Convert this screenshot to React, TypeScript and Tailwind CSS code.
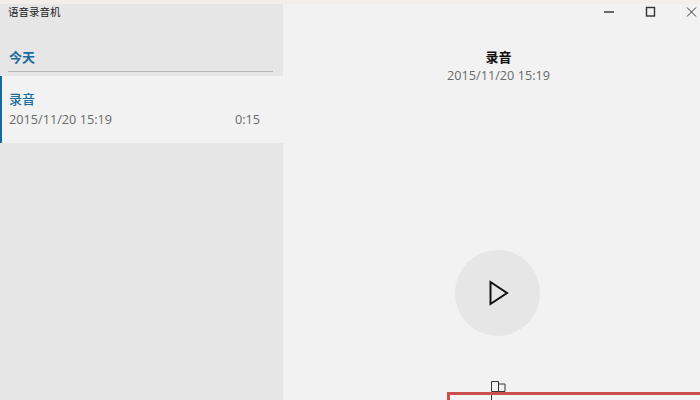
const cjk = "font-['Noto_Sans_CJK_SC','Noto_Sans',sans-serif]";
const latin = "font-['Open_Sans','Noto_Sans_CJK_SC',sans-serif] text-[12.7px]";

function WindowButtons() {
  return (
    <div className="flex h-4 justify-end items-center shrink-0">
      <svg width="46" height="16" viewBox="0 0 46 16">
        <path d="M26 8h10" stroke="#444" strokeWidth="1.6" />
      </svg>
      <svg width="46" height="16" viewBox="0 0 46 16">
        <rect x="22.5" y="3.5" width="8" height="8.5" fill="none" stroke="#333" strokeWidth="1.4" />
      </svg>
      <svg width="30" height="16" viewBox="0 0 30 16">
        <path d="M17 3.5l9 9M26 3.5l-9 9" stroke="#333" strokeWidth="1" fill="none" />
      </svg>
    </div>
  );
}

export default function App() {
  return (
    <div className={`flex w-[700px] h-[400px] overflow-hidden bg-[#f2f2f2] ${cjk}`}>
      {/* Sidebar */}
      <aside className="flex flex-col w-[283px] h-full bg-[#e6e6e6] shrink-0">
        <div className="h-1 bg-[#f4eee9] shrink-0" />
        <div className="pl-2 h-[38px] text-[10.5px] leading-4 text-[#222] shrink-0">语音录音机</div>
        <div className="ml-2 mr-[10px] h-[30px] pt-[5px] border-b border-[#b5b5b5] shrink-0">
          <div className="pl-[1px] text-[13px] leading-5 font-semibold text-[#1b6c9c]">今天</div>
        </div>
        <div className="mt-[4px] flex flex-col h-[67px] justify-center bg-[#f2f2f2] border-l-2 border-[#0f6ba8] pl-[7px] pr-[23px] shrink-0">
          <div className="text-[13px] leading-5 mt-[-2px] font-medium text-[#1b6c9c]">录音</div>
          <div className={`flex justify-between leading-[18px] mt-[1px] text-[#6a6a6a] ${latin}`}>
            <span>2015/11/20 15:19</span>
            <span>0:15</span>
          </div>
        </div>
      </aside>

      {/* Detail pane */}
      <main className="flex-1 flex flex-col min-w-0">
        <div className="h-1 bg-[#f4eee9] shrink-0" />
        <WindowButtons />
        <div className="mt-[27px] flex flex-col items-center pl-[14px] shrink-0">
          <div className="text-[13px] leading-5 font-bold text-[#111]">录音</div>
          <div className={`leading-[17px] text-[#6a6a6a] ${latin}`}>2015/11/20 15:19</div>
        </div>
        <div className="mt-[166px] ml-[172px] flex items-center justify-center w-[85px] h-[86px] rounded-full bg-[#e6e6e6] shrink-0">
          <svg width="20" height="26" viewBox="0 0 20 26" className="ml-[2px]">
            <path d="M1.5 2v22L18 13z" fill="none" stroke="#111" strokeWidth="2" />
          </svg>
        </div>
        <div className="mt-[56px] ml-[164px] relative shrink-0 w-[260px] h-[40px] border-[3px] border-[#c9504f]">
          <svg width="16" height="20" viewBox="0 0 16 20" className="absolute left-[41px] top-[-14px]">
            <path d="M.5 .5h7v10h-7zM7.5 3h6.5v7.5h-6.5zM.5 14v6" fill="none" stroke="#333" strokeWidth="1" />
          </svg>
        </div>
      </main>
    </div>
  );
}
